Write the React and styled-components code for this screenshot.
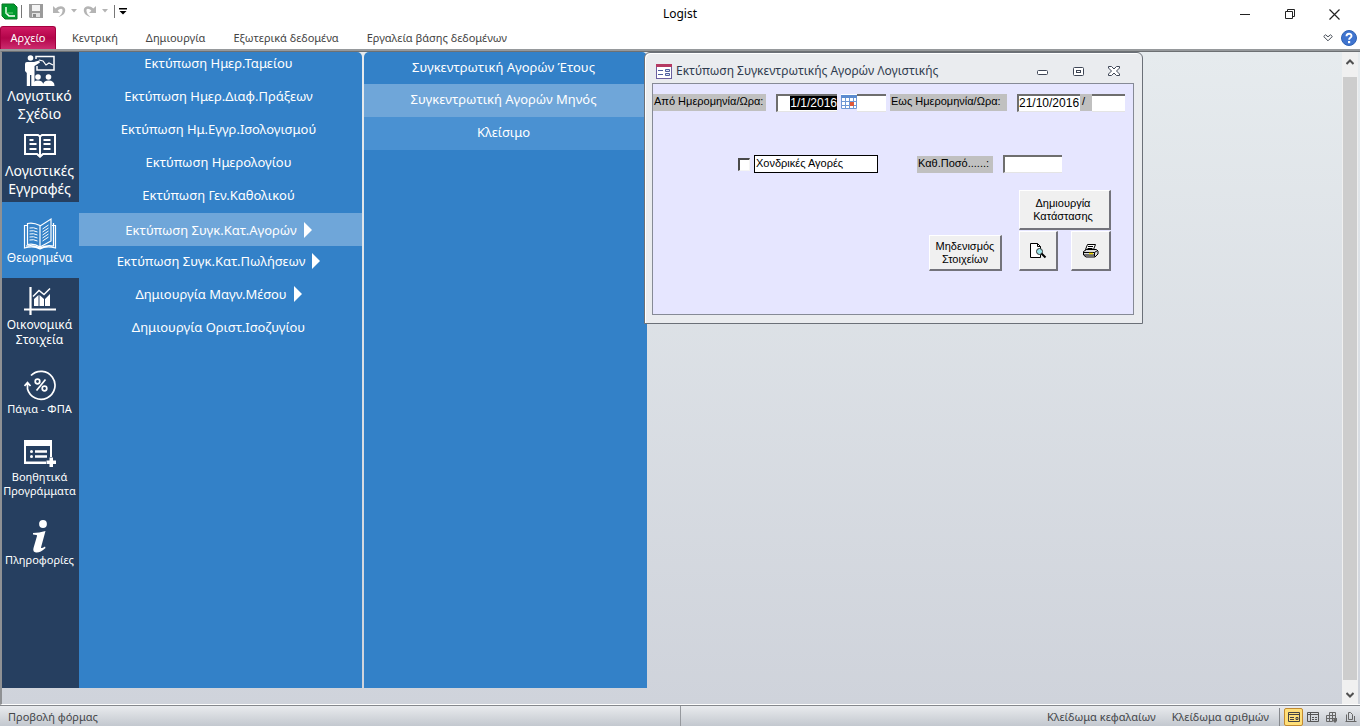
import { useEffect, useRef } from "react";
import styled, { createGlobalStyle, css } from "styled-components";

const uiFont = `"Noto Sans", "Open Sans", sans-serif`;
const formFont = `"Liberation Sans", Arial, sans-serif`;

const GlobalStyle = createGlobalStyle`
  * {
    box-sizing: border-box;
  }
  body {
    margin: 0;
    background: #ffffff;
    font-family: ${uiFont};
  }
  button {
    font-family: inherit;
    padding: 0;
    border: 0;
    background: none;
  }
`;

const Window = styled.div`
  display: flex;
  flex-direction: column;
  min-height: 100vh;
`;

/* title bar */
const TitleBar = styled.header`
  display: grid;
  grid-template-columns: 1fr auto 1fr;
  align-items: center;
  height: 26px;
`;

const QuickAccess = styled.div`
  display: flex;
  align-items: center;
  align-self: start;
  height: 22px;
`;

const QuickButton = styled.button`
  display: flex;
  align-items: center;
  justify-content: center;
  width: ${(p) => p.$width}px;
  height: 20px;
`;

const Divider = styled.span`
  width: 1px;
  height: 13px;
  margin-left: ${(p) => p.$gap || 0}px;
  background: #777777;
`;

const Title = styled.h1`
  margin: 0;
  font-size: 12px;
  line-height: 16px;
  font-weight: 400;
  color: #000000;
`;

const WindowControls = styled.div`
  display: flex;
  justify-content: flex-end;
  padding-right: 3px;
`;

const ControlButton = styled.button`
  display: flex;
  align-items: center;
  justify-content: center;
  width: 45px;
  height: 28px;
`;

/* ribbon */
const Ribbon = styled.nav`
  display: flex;
  align-items: stretch;
  height: 25px;
  border-bottom: 2px solid #96999c;
`;

const RibbonTab = styled.button`
  padding: 0 14px;
  font-size: 11px;
  line-height: 20px;
  color: #444444;
  white-space: nowrap;
`;

const FileTab = styled(RibbonTab)`
  width: 56px;
  margin-right: 2px;
  padding: 0;
  border: 1px solid #a3003f;
  border-bottom: 0;
  border-radius: 3px 3px 0 0;
  background: linear-gradient(#cf1a62, #b3054a 50%, #cc2c6e);
  color: #ffffff;
`;

const RibbonTools = styled.div`
  display: flex;
  align-items: center;
  gap: 8px;
  margin-left: auto;
  padding-right: 3px;
  button {
    display: flex;
  }
`;

/* work area */
const Workspace = styled.main`
  position: relative;
  flex: 1;
  display: flex;
  border-top: 1px solid #6d7073;
  border-left: 2px solid #8f9194;
  border-bottom: 1px solid #ffffff;
  background: linear-gradient(#e6ebee, #cfd3db);
`;

const Rail = styled.nav`
  display: flex;
  flex-direction: column;
  width: 77px;
  margin-bottom: 16px;
  background: #263f60;
`;

const RailItem = styled.button`
  display: flex;
  flex-direction: column;
  align-items: center;
  justify-content: flex-start;
  height: ${(p) => p.$height}px;
  padding-top: ${(p) => p.$top}px;
  padding-right: 2px;
  gap: ${(p) => p.$gap || 0}px;
  background: ${(p) => (p.$active ? "#3381c8" : "transparent")};
  color: #ffffff;
  font-size: ${(p) => p.$size}px;
  line-height: ${(p) => p.$line}px;
  text-align: center;
  white-space: pre;
  svg {
    flex: none;
  }
`;

const Menu = styled.ul`
  width: 283px;
  margin: 0 0 16px;
  padding: 0;
  list-style: none;
  background: #3381c8;
`;

const MenuButton = styled.button`
  display: flex;
  align-items: center;
  justify-content: center;
  gap: 7px;
  width: 100%;
  height: 33px;
  padding: 0 4px 3px 0;
  color: #ffffff;
  font-size: 13px;
  line-height: 20px;
  white-space: nowrap;
  ${(p) =>
    p.$tone &&
    css`
      padding-bottom: 0;
      background: ${p.$tone};
    `}
`;

const MainMenu = styled(Menu)`
  margin-right: 2px;
  border-radius: 0 5px 0 0;
  li:first-child ${MenuButton} {
    height: 29px;
    padding-bottom: 7px;
  }
`;

const SubMenu = styled(Menu)`
  border-radius: 5px 5px 0 0;
  ${MenuButton} {
    padding-bottom: 3px;
  }
  li:first-child ${MenuButton} {
    height: 32px;
  }
`;

const Arrow = styled.span`
  border: solid transparent;
  border-width: 8px 0 8px 8px;
  border-left-color: #ffffff;
`;

const ScrollBar = styled.div`
  display: flex;
  flex-direction: column;
  width: 16px;
  margin-left: auto;
  margin-right: 2px;
  background: #f0f0f0;
`;

const ScrollButton = styled.button`
  display: flex;
  align-items: center;
  justify-content: center;
  height: ${(p) => p.$height}px;
  padding-bottom: ${(p) => p.$lift || 0}px;
  padding-top: ${(p) => p.$drop || 0}px;
`;

const Thumb = styled.div`
  flex: 1;
  margin: 0 1px;
  background: #cdcdcd;
`;

/* floating form window */
const Dialog = styled.section`
  position: absolute;
  top: 0;
  left: 642px;
  width: 499px;
  padding: 0 8px 8px 7px;
  border: 1px solid #6b7078;
  border-radius: 6px 6px 0 0;
  background: #eaecef;
  box-shadow: inset 1px 1px 0 #ffffff;
`;

const DialogBar = styled.header`
  display: flex;
  align-items: center;
  height: 30px;
  padding: 6px 2px 0 4px;
`;

const DialogTitle = styled.h2`
  flex: 1;
  margin: 0 0 0 4px;
  font-size: 12px;
  line-height: 16px;
  font-weight: 400;
  color: #2f3b4e;
  white-space: nowrap;
`;

const DialogButton = styled.button`
  display: flex;
  align-items: center;
  justify-content: center;
  width: 36px;
  height: 20px;
`;

const Form = styled.form`
  height: 232px;
  padding-top: 10px;
  border: 1px solid #868a96;
  background: #e6e6ff;
  font-family: ${formFont};
  font-size: 11px;
  line-height: 13px;
  color: #000000;
`;

const DateRow = styled.div`
  display: flex;
  align-items: flex-start;
`;

const FieldLabel = styled.label`
  width: ${(p) => p.$width}px;
  height: 17px;
  margin-left: ${(p) => p.$gap || 0}px;
  padding: 1px 0 0 1px;
  background: #c0c0c0;
  white-space: nowrap;
`;

const Field = styled.input`
  width: ${(p) => p.$width}px;
  height: 18px;
  margin: 0 0 0 ${(p) => p.$gap || 0}px;
  padding: 0 0 2px;
  border: solid #6e6e6e;
  border-width: 2px 0 0 ${(p) => (p.$joined ? 0 : 2)}px;
  border-bottom: 1px solid #e4e4e4;
  border-radius: 0;
  background: #ffffff;
  font: inherit;
  font-size: ${(p) => (p.$large ? 12 : 11)}px;
  text-align: ${(p) => p.$align || "left"};
  outline: none;
  &::selection {
    background: #000000;
    color: #ffffff;
  }
`;

const Slash = styled.span`
  width: 12px;
  height: 17px;
  padding: 1px 0 0 2px;
  background: #c0c0c0;
`;

const CalendarButton = styled.button`
  display: flex;
  align-items: flex-start;
  justify-content: flex-end;
  width: 20px;
  height: 17px;
`;

const OptionRow = styled.div`
  display: flex;
  align-items: center;
  margin-top: 43px;
  padding-left: 85px;
`;

const Check = styled.input`
  appearance: none;
  width: 12px;
  height: 13px;
  margin: 0 4px 0 0;
  border: 1px solid #f4f4f4;
  border-top: 2px solid #4a4a4a;
  border-left: 2px solid #4a4a4a;
  background: #ffffff;
  &:checked {
    background: #404040;
  }
`;

const CheckLabel = styled.label`
  width: 124px;
  height: 18px;
  margin-right: 39px;
  padding: 1px;
  border: 1px solid #000000;
  background: #ffffff;
`;

const Actions = styled.div`
  display: grid;
  grid-template-columns: 77px 39px 40px;
  grid-template-rows: 40px 41px;
  column-gap: 13px;
  justify-content: end;
  margin-top: 17px;
  padding-right: 22px;
`;

const PushButton = styled.button`
  display: flex;
  align-items: center;
  justify-content: center;
  border: 1px solid #ffffff;
  border-right: 2px solid #73737b;
  border-bottom: 2px solid #73737b;
  background: #f0f0f0;
  font-size: 11px;
  line-height: 13px;
  color: #000000;
  white-space: pre;
`;

const CreateButton = styled(PushButton)`
  grid-column: 2 / 4;
  padding-right: 3px;
`;

const ResetButton = styled(PushButton)`
  grid-column: 1;
  margin: 5px 4px 0 0;
`;

const IconButton = styled(PushButton)`
  margin-top: 1px;
`;

/* status bar */
const StatusBar = styled.footer`
  display: grid;
  grid-template-columns: 1fr 1fr;
  align-items: center;
  height: 21px;
  border-top: 1px solid #85888d;
  background: linear-gradient(#e9ebee, #c3c8cf);
  font-size: 11px;
  line-height: 16px;
  color: #44464a;
  white-space: nowrap;
`;

const StatusLeft = styled.span`
  padding: 2px 0 0 8px;
`;

const StatusRight = styled.div`
  display: flex;
  align-items: center;
  justify-content: flex-end;
  gap: 16px;
  height: 100%;
  padding-top: 2px;
  border-left: 1px solid #96999e;
`;

const ViewButtons = styled.div`
  display: flex;
  align-items: center;
  height: 18px;
  margin-left: -6px;
  padding-left: 4px;
  border-left: 1px solid #85888d;
`;

const ViewButton = styled.button`
  display: flex;
  align-items: center;
  justify-content: center;
  width: 19px;
  height: 18px;
  ${(p) =>
    p.$active &&
    css`
      border: 1px solid #c28a30;
      border-radius: 2px;
      background: #ffdf78;
    `}
`;

const LogoIcon = () => (
  <svg width="17" height="17" viewBox="0 0 17 17">
    <path d="M1 1h12l3 3v12H4l-3-3z" fill="#009a2e" stroke="#0a7424" />
    <path d="M5 4v6l3 3h6" fill="none" stroke="#fff" strokeWidth="1.6" />
    <path d="M5 4v6h7" fill="none" stroke="#7fe08d" strokeWidth="0.8" />
  </svg>
);

const SaveIcon = () => (
  <svg width="14" height="14" viewBox="0 0 14 14">
    <path d="M0 0h14v14H1l-1-1z" fill="#9b9b9b" />
    <path d="M3 1h8v6H3z" fill="#f3f3f3" />
    <path d="M3 9h8v4H3z" fill="#e0e0e0" />
    <path d="M4 10h3v3H4z" fill="#8a8a8a" />
  </svg>
);

const UndoIcon = ({ flip }) => (
  <svg width="13" height="13" viewBox="0 0 13 13">
    <g transform={flip ? "matrix(-1 0 0 1 13 0)" : undefined}>
      <path d="M0 1v7h7L4.700 5.700C7 3 10 3 9.500 6 9.200 8.500 8 10 5.500 12 10 11 12.500 8 12.200 4.800 11.800 0.500 6 0 2.700 3.500z" fill="#b4b4b4" />
    </g>
  </svg>
);

const CaretIcon = ({ color }) => (
  <svg width="6" height="4" viewBox="0 0 6 4">
    <path d="M0 0h6L3 3.500z" fill={color} />
  </svg>
);

const CustomizeIcon = () => (
  <svg width="8" height="7" viewBox="0 0 8 7">
    <path d="M0 0h8v1.500H0zM0.500 3h7L4 6.500z" fill="#000" />
  </svg>
);

const HelpIcon = () => (
  <svg width="16" height="16" viewBox="0 0 16 16">
    <circle cx="8" cy="8" r="7.500" fill="#3f74cf" stroke="#2f62b4" />
    <path d="M5.500 6.200C5.500 3 10.500 3 10.500 6c0 1.800-2.400 1.800-2.400 3.700" fill="none" stroke="#fff" strokeWidth="1.900" />
    <rect x="7" y="11" width="2.200" height="2.200" fill="#fff" />
  </svg>
);

const TrainingIcon = () => (
  <svg width="34" height="33" viewBox="0 0 34 33" fill="#fff">
    <circle cx="7.500" cy="4" r="2.800" />
    <path d="M2 10q0-2 2-2h7l5-1.500 1 2L11.500 12v20H8.300V21H7v11H3.800V19L2 17z" />
    <path d="M13 5V2.500h18V16H14v-4" fill="none" stroke="#fff" strokeWidth="1.500" />
    <path d="M16 6l4 1 3 4 3-2 4 2" fill="none" stroke="#fff" strokeWidth="1.200" />
    <circle cx="15" cy="23" r="2.800" />
    <circle cx="25.500" cy="23" r="2.800" />
    <path d="M9.500 32q0-5.500 5.500-5.500 4 0 5.200 3.300 1.300-3.300 5.300-3.300 6 0 6 5.500z" />
  </svg>
);

const BookIcon = () => (
  <svg width="32" height="25" viewBox="0 0 32 25" fill="none" stroke="#fff" strokeWidth="2">
    <path d="M1 1h13l2 1.500L18 1h13v19H19l-3 2.500L13 20H1zM16 2v20" />
    <path d="M5.500 6h4M5.500 10h7M5.500 15h7M19.500 6h7M19.500 10h7M19.500 15h7" />
    <path d="M13 21h6l-3 3z" fill="#fff" stroke="none" />
  </svg>
);

const LedgerIcon = () => (
  <svg width="34" height="34" viewBox="0 0 34 34" fill="none" stroke="#fff" strokeWidth="1.200">
    <path d="M17 8.500Q10 5 4.500 6.500v21Q11 26 17 30zM17 30V9l11-7v22z" />
    <path d="M4 8.500H1.500V31q9-2.500 15.500 1 6-3.500 15.500-1V8.500H29M3 29q8-1.500 14 2 6-3.500 13.500-2V6" />
    <path d="M6.500 11q4-1 8 1M6.500 14q4-1 8 1M6.500 17q4-1 8 1M6.500 20q4-1 8 1M6.500 23q4-1 8 1M19.500 12l6-4M19.500 15l6-4M19.500 18l6-4M19.500 21l6-4M19.500 24l6-4" strokeWidth="1" />
  </svg>
);

const ChartIcon = () => (
  <svg width="32" height="28" viewBox="0 0 32 28">
    <path d="M6.500 0v28M0 22.500h32" stroke="#fff" strokeWidth="2.200" />
    <path d="M10 19v-7l4.500-4v11zM15.500 19V8l4.500 4v7zM21 19v-7l5-5v12z" fill="#fff" />
    <path d="M9 9.500l6-6 5 4 6-6" fill="none" stroke="#fff" strokeWidth="1.500" />
  </svg>
);

const PercentIcon = () => (
  <svg width="32" height="32" viewBox="0 0 32 32" fill="none" stroke="#fff" strokeWidth="1.700">
    <path d="M7 6.500A14 14 0 1 1 3.500 20V14M0.500 17l3-3.500 3 3.500" />
    <circle cx="13.500" cy="12.500" r="2.300" />
    <circle cx="20.500" cy="19.500" r="2.300" />
    <path d="M21.500 10.500l-9 11" />
  </svg>
);

const ListPlusIcon = () => (
  <svg width="32" height="28" viewBox="0 0 32 28" fill="#fff">
    <path d="M0 1h28v17h-2V7H2v15.500h20V25H0z" />
    <circle cx="7.500" cy="12.500" r="1.500" />
    <circle cx="7.500" cy="17.500" r="1.500" />
    <path d="M11 11.300h12v2.400H11zM11 16.300h12v2.400H11z" />
    <path d="M25.500 18.500h3.500v3h3V25h-3v3h-3.500v-3h-3v-3.500h3z" />
  </svg>
);

const InfoIcon = () => (
  <svg width="18" height="33" viewBox="0 0 18 33" fill="#fff">
    <circle cx="12" cy="4" r="3.900" />
    <path d="M2 13q6 0 12.500-2L10 27.500q0 1.500 4-1l.5 1.500Q9 33 5 32.500 1.500 32 2.500 28L6 16q.5-1.500-4-1.500z" />
  </svg>
);

const FormIcon = () => (
  <svg width="16" height="15" viewBox="0 0 16 15">
    <rect x="0.500" y="0.500" width="15" height="14" fill="#fff" stroke="#6b5f9e" />
    <path d="M0 0h16v3H0z" fill="#b53a62" />
    <path d="M2 6.500h5M2 10.500h5" stroke="#50609e" />
    <path d="M9.500 5.500h4v2h-4zM9.500 9.500h4v2h-4z" fill="#dce4f5" stroke="#50609e" />
  </svg>
);

const CalendarIcon = () => (
  <svg width="16" height="15" viewBox="0 0 16 15">
    <path d="M0 0h16v15H0z" fill="#fff" />
    <path d="M0 1h16v3H0z" fill="#5b8bd0" />
    <path d="M0.500 4v10.500h15V4M0 7.500h16M0 11.500h16M4.500 4v11M8.500 4v11M12.500 4v11" fill="none" stroke="#6e97d4" />
    <rect x="9" y="8" width="4" height="4" fill="#e05a3a" />
  </svg>
);

const PreviewIcon = () => (
  <svg width="18" height="16" viewBox="0 0 18 16">
    <path d="M1.500 0.500h7l3 3v11h-10z" fill="#fff" stroke="#000" />
    <path d="M8.500 0.500v3h3" fill="none" stroke="#000" />
    <circle cx="10.500" cy="8.500" r="3" fill="#9be4ea" stroke="#333" />
    <path d="M12.500 10.500l4 4" stroke="#000" strokeWidth="2" />
  </svg>
);

const PrinterIcon = () => (
  <svg width="17" height="16" viewBox="0 0 17 16">
    <path d="M5.500 1.500h8l-2 5h-8z" fill="#fff" stroke="#000" />
    <path d="M6 3.500h5M5.500 5.500h5" stroke="#000" />
    <path d="M1.500 8.500l3-2h10l1.500 1.500v3l-3 3h-9l-2.500-2z" fill="#ddd" stroke="#000" />
    <path d="M2 9.500h10.500l3-2M12.500 9.500v4M2 12h10" fill="none" stroke="#000" />
    <path d="M7 10.500h4" stroke="#f4dc00" strokeWidth="1.500" />
  </svg>
);

const Chevron = ({ down }) => (
  <svg width="8" height="6" viewBox="0 0 8 6">
    <path d={down ? "M0.500 1L4 4.500 7.500 1" : "M0.500 5L4 1.500 7.500 5"} fill="none" stroke="#505050" strokeWidth="2" />
  </svg>
);

const railItems = [
  { label: "Λογιστικό\nΣχέδιο", icon: <TrainingIcon />, height: 75, top: 2, size: 14, line: 18 },
  { label: "Λογιστικές\nΕγγραφές", icon: <BookIcon />, height: 75, top: 7, gap: 3, size: 14, line: 18 },
  { label: "Θεωρημένα", icon: <LedgerIcon />, height: 76, top: 15, size: 12, line: 14, active: true },
  { label: "Οικονομικά\nΣτοιχεία", icon: <ChartIcon />, height: 76, top: 9, gap: 2, size: 12, line: 15 },
  { label: "Πάγια - ΦΠΑ", icon: <PercentIcon />, height: 76, top: 15, gap: 1, size: 11, line: 14 },
  { label: "Βοηθητικά\nΠρογράμματα", icon: <ListPlusIcon />, height: 76, top: 9, gap: 3, size: 11, line: 14 },
  { label: "Πληροφορίες", icon: <InfoIcon />, height: 76, top: 14, size: 11, line: 14 },
];

const mainMenu = [
  { label: "Εκτύπωση Ημερ.Ταμείου" },
  { label: "Εκτύπωση Ημερ.Διαφ.Πράξεων" },
  { label: "Εκτύπωση Ημ.Εγγρ.Ισολογισμού" },
  { label: "Εκτύπωση Ημερολογίου" },
  { label: "Εκτύπωση Γεν.Καθολικού" },
  { label: "Εκτύπωση Συγκ.Κατ.Αγορών", arrow: true, tone: "#6fa6d9" },
  { label: "Εκτύπωση Συγκ.Κατ.Πωλήσεων", arrow: true },
  { label: "Δημιουργία Μαγν.Μέσου", arrow: true },
  { label: "Δημιουργία Οριστ.Ισοζυγίου" },
];

const subMenu = [
  { label: "Συγκεντρωτική Αγορών Έτους" },
  { label: "Συγκεντρωτική Αγορών Μηνός", tone: "#6fa6d9" },
  { label: "Κλείσιμο", tone: "#4a91d2" },
];

const MenuRows = ({ items }) =>
  items.map((item) => (
    <li key={item.label}>
      <MenuButton $tone={item.tone}>
        {item.label}
        {item.arrow && <Arrow />}
      </MenuButton>
    </li>
  ));

const ReportDialog = () => {
  const fromDate = useRef(null);

  useEffect(() => {
    fromDate.current.focus();
    fromDate.current.select();
  }, []);

  return (
    <Dialog>
      <DialogBar>
        <FormIcon />
        <DialogTitle>Εκτύπωση Συγκεντρωτικής Αγορών Λογιστικής</DialogTitle>
        <DialogButton aria-label="Ελαχιστοποίηση">
          <svg width="11" height="9">
            <rect x="0.5" y="3.5" width="10" height="4" rx="1" fill="#fff" stroke="#3f4656" />
          </svg>
        </DialogButton>
        <DialogButton aria-label="Μεγιστοποίηση">
          <svg width="11" height="9">
            <rect x="0.5" y="0.5" width="10" height="8" rx="1" fill="#fff" stroke="#3f4656" />
            <rect x="3.5" y="3.5" width="4" height="2" fill="#fff" stroke="#3f4656" />
          </svg>
        </DialogButton>
        <DialogButton aria-label="Κλείσιμο">
          <svg width="12" height="10" viewBox="0 0 12 10">
            <path d="M0.500 0.500h3L6 3 8.500 0.500h3V2L8.500 5l3 3v1.500h-3L6 7 3.500 9.500h-3V8l3-3-3-3z" fill="#fff" stroke="#3f4656" />
          </svg>
        </DialogButton>
      </DialogBar>
      <Form onSubmit={(e) => e.preventDefault()}>
        <DateRow>
          <FieldLabel htmlFor="from" $width={113}>Από Ημερομηνία/Ωρα:</FieldLabel>
          <Field id="from" ref={fromDate} $width={61} $gap={10} $align="right" $large defaultValue="1/1/2016" />
          <CalendarButton type="button" aria-label="Ημερολόγιο">
            <CalendarIcon />
          </CalendarButton>
          <Field aria-label="Από Ωρα" $width={29} $joined />
          <FieldLabel htmlFor="to" $width={117} $gap={4}>Εως Ημερομηνία/Ωρα:</FieldLabel>
          <Field id="to" $width={63} $gap={10} $large defaultValue="21/10/2016" />
          <Slash>/</Slash>
          <Field aria-label="Εως Ωρα" $width={33} $joined />
        </DateRow>
        <OptionRow>
          <Check type="checkbox" id="wholesale" />
          <CheckLabel htmlFor="wholesale">Χονδρικές Αγορές</CheckLabel>
          <FieldLabel htmlFor="amount" $width={76}>Καθ.Ποσό......:</FieldLabel>
          <Field id="amount" $width={59} $gap={10} />
        </OptionRow>
        <Actions>
          <CreateButton>{"Δημιουργία\nΚατάστασης"}</CreateButton>
          <ResetButton type="reset">{"Μηδενισμός\nΣτοιχείων"}</ResetButton>
          <IconButton type="button" aria-label="Προεπισκόπηση">
            <PreviewIcon />
          </IconButton>
          <IconButton type="button" aria-label="Εκτύπωση">
            <PrinterIcon />
          </IconButton>
        </Actions>
      </Form>
    </Dialog>
  );
};

const App = () => (
  <Window>
    <GlobalStyle />
    <TitleBar>
      <QuickAccess>
        <QuickButton $width={19} aria-label="Logist"><LogoIcon /></QuickButton>
        <Divider $gap={2} />
        <QuickButton $width={28} aria-label="Αποθήκευση"><SaveIcon /></QuickButton>
        <QuickButton $width={18} aria-label="Αναίρεση"><UndoIcon /></QuickButton>
        <QuickButton $width={11} aria-label="Λίστα αναίρεσης"><CaretIcon color="#b4b4b4" /></QuickButton>
        <QuickButton $width={20} aria-label="Επανάληψη"><UndoIcon flip /></QuickButton>
        <QuickButton $width={11} aria-label="Λίστα επανάληψης"><CaretIcon color="#b4b4b4" /></QuickButton>
        <Divider $gap={4} />
        <QuickButton $width={15} aria-label="Προσαρμογή"><CustomizeIcon /></QuickButton>
      </QuickAccess>
      <Title>Logist</Title>
      <WindowControls>
        <ControlButton aria-label="Ελαχιστοποίηση">
          <svg width="10" height="10"><path d="M0 5.500h10" stroke="#222" /></svg>
        </ControlButton>
        <ControlButton aria-label="Επαναφορά">
          <svg width="10" height="10" fill="none" stroke="#222"><path d="M0.500 2.500h7v7h-7zM2.500 2.500v-2h7v7h-2" /></svg>
        </ControlButton>
        <ControlButton aria-label="Κλείσιμο παραθύρου">
          <svg width="11" height="11"><path d="M0.500 0.500l10 10M10.500 0.500l-10 10" stroke="#222" strokeWidth="1.200" /></svg>
        </ControlButton>
      </WindowControls>
    </TitleBar>
    <Ribbon>
      <FileTab>Αρχείο</FileTab>
      <RibbonTab>Κεντρική</RibbonTab>
      <RibbonTab>Δημιουργία</RibbonTab>
      <RibbonTab>Εξωτερικά δεδομένα</RibbonTab>
      <RibbonTab>Εργαλεία βάσης δεδομένων</RibbonTab>
      <RibbonTools>
        <button aria-label="Ανάπτυξη κορδέλας">
          <svg width="10" height="8" viewBox="0 0 10 8">
            <path d="M0.700 2.500L2.500 0.800 5 2.800 7.500 0.800 9.300 2.500 5 6.800z" fill="#fff" stroke="#444a55" />
          </svg>
        </button>
        <button aria-label="Βοήθεια"><HelpIcon /></button>
      </RibbonTools>
    </Ribbon>
    <Workspace>
      <Rail>
        {railItems.map((item) => (
          <RailItem
            key={item.label}
            $height={item.height}
            $top={item.top}
            $gap={item.gap}
            $size={item.size}
            $line={item.line}
            $active={item.active}
          >
            {item.icon}
            {item.label}
          </RailItem>
        ))}
      </Rail>
      <MainMenu><MenuRows items={mainMenu} /></MainMenu>
      <SubMenu><MenuRows items={subMenu} /></SubMenu>
      <ScrollBar>
        <ScrollButton $height={25} $lift={6} aria-label="Κύλιση επάνω"><Chevron /></ScrollButton>
        <Thumb />
        <ScrollButton $height={24} $drop={6} aria-label="Κύλιση κάτω"><Chevron down /></ScrollButton>
      </ScrollBar>
      <ReportDialog />
    </Workspace>
    <StatusBar>
      <StatusLeft>Προβολή φόρμας</StatusLeft>
      <StatusRight>
        <span>Κλείδωμα κεφαλαίων</span>
        <span>Κλείδωμα αριθμών</span>
        <ViewButtons>
          <ViewButton $active aria-label="Προβολή φόρμας">
            <svg width="12" height="10" fill="none" stroke="#444"><path d="M0.500 0.500h11v9H0.500zM0 2.500h12M2 5.500h4M2 7.500h4M8 5.500h2v2H8z" /></svg>
          </ViewButton>
          <ViewButton aria-label="Φύλλο δεδομένων">
            <svg width="12" height="10" fill="none" stroke="#555"><path d="M0.500 0.500h11v9H0.500zM0 2.500h12M3.500 0v10M5 5.500h2M8 5.500h2M5 7.500h2M8 7.500h2" /></svg>
          </ViewButton>
          <ViewButton aria-label="Διάταξη">
            <svg width="12" height="11" fill="none" stroke="#666"><path d="M3.500 0.500h6v6M6.500 0.500v9M0.500 3.500h9v3M0.500 3.500v6h6M0.500 6.500h9M3.500 0.500v9" /><path d="M8 6h3v3l-2 2-2-2z" fill="#666" stroke="none" /></svg>
          </ViewButton>
          <ViewButton aria-label="Σχεδίαση">
            <svg width="12" height="11" fill="none" stroke="#666"><path d="M3.500 7.500v-7h2l2 2v5zM1.500 2.500v7h8M0.500 9.500h11M9.500 4v6" /></svg>
          </ViewButton>
        </ViewButtons>
      </StatusRight>
    </StatusBar>
  </Window>
);

export default App;
